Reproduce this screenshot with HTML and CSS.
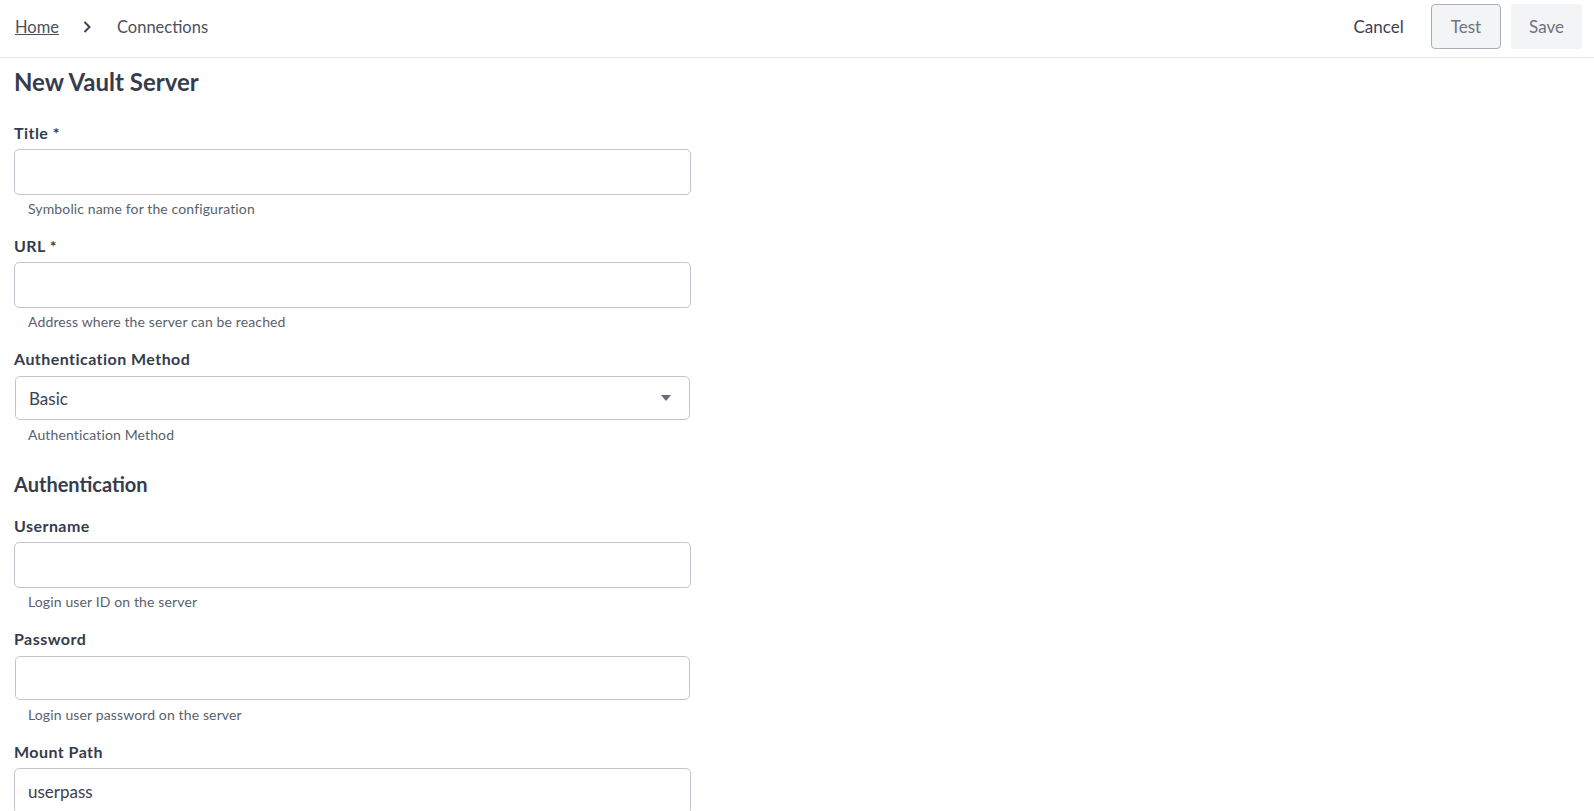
FILE: index.html
```html
<!DOCTYPE html>
<html lang="en">
<head>
  <meta charset="UTF-8">
  <title>New Vault Server</title>
  <link rel="stylesheet" href="styles.css">
</head>
<body>

  <header class="topbar">
    <nav class="crumbs">
      <a href="#" class="crumb-link">Home</a>
      <svg class="crumb-sep" width="10" height="14" viewBox="0 0 10 14">
        <path d="M2.5 2 L7.5 7 L2.5 12" fill="none" stroke="#3d4352" stroke-width="2"/>
      </svg>
      <span class="crumb-current">Connections</span>
    </nav>
    <div class="actions">
      <button class="btn btn-plain">Cancel</button>
      <button class="btn btn-outline">Test</button>
      <button class="btn btn-soft">Save</button>
    </div>
  </header>

  <main class="page">
    <h1 class="page-title">New Vault Server</h1>

    <div class="field">
      <label class="field-label">Title *</label>
      <input class="text-input" type="text">
      <p class="field-help">Symbolic name for the configuration</p>
    </div>

    <div class="field">
      <label class="field-label">URL *</label>
      <input class="text-input" type="text">
      <p class="field-help">Address where the server can be reached</p>
    </div>

    <div class="field">
      <label class="field-label">Authentication Method</label>
      <div class="inset-wrap">
        <div class="select-box">
          <span>Basic</span>
          <span class="caret"></span>
        </div>
      </div>
      <p class="field-help">Authentication Method</p>
    </div>

    <h3 class="section-title">Authentication</h3>

    <div class="field">
      <label class="field-label">Username</label>
      <input class="text-input" type="text">
      <p class="field-help">Login user ID on the server</p>
    </div>

    <div class="field">
      <label class="field-label">Password</label>
      <div class="inset-wrap">
        <input class="text-input inset" type="password">
      </div>
      <p class="field-help">Login user password on the server</p>
    </div>

    <div class="field">
      <label class="field-label">Mount Path</label>
      <input class="text-input" type="text" value="userpass">
    </div>
  </main>

</body>
</html>
```

FILE: styles.css
```css
body {
  margin: 0;
  font-family: Lato, "Open Sans", sans-serif;
  color: #3b4150;
  background: #ffffff;
  overflow: hidden;
}

.topbar {
  height: 53px;
  padding: 0 12px 4px 15px;
  display: flex;
  align-items: center;
  justify-content: space-between;
  border-bottom: 1px solid #e6e6e6;
}

.crumbs {
  display: flex;
  align-items: center;
  font-size: 16.5px;
}

.crumb-link {
  color: #4a5060;
  text-decoration: underline;
}

.crumb-sep {
  margin: 0 25px 0 23px;
}

.crumb-current {
  color: #4a5060;
}

.actions {
  display: flex;
  gap: 10px;
  align-items: center;
}

.btn {
  font-family: Lato, sans-serif;
  font-size: 17px;
  height: 45px;
  padding: 0 18px;
  border-radius: 4px;
  border: 1px solid transparent;
  background: none;
  cursor: pointer;
}

.btn-plain {
  color: #3b4150;
  padding: 0 16px;
}

.btn-outline {
  background: #f3f4f6;
  border-color: #a9adb5;
  color: #6d7380;
  padding: 0 19px;
}

.btn-soft {
  padding: 0 17px;
  background: #f3f4f6;
  color: #6d7380;
}

.page {
  padding: 0 14px;
  width: 677px;
}

.page-title {
  font-size: 24px;
  line-height: 28px;
  margin: 10px 0 27px;
  color: #363c4b;
}

.field {
  margin-bottom: 18px;
}

.field-label {
  display: block;
  font-size: 16px;
  font-weight: bold;
  letter-spacing: 0.45px;
  line-height: 20px;
  margin-bottom: 6px;
  color: #363c4b;
}

.text-input {
  display: block;
  box-sizing: border-box;
  width: 100%;
  height: 46px;
  margin: 0;
  padding: 0 13px;
  border: 1px solid #c3c6cc;
  border-radius: 5px;
  font-family: Lato, sans-serif;
  font-size: 17px;
  color: #3b4150;
  outline: none;
}

.inset-wrap {
  padding: 1px;
  height: 46px;
  box-sizing: border-box;
}

.text-input.inset {
  height: 44px;
}

.select-box {
  box-sizing: border-box;
  height: 44px;
  display: flex;
  align-items: center;
  justify-content: space-between;
  padding: 0 18px 0 13px;
  border: 1px solid #c3c6cc;
  border-radius: 5px;
  font-size: 17px;
}

.caret {
  width: 0;
  height: 0;
  border-left: 5px solid transparent;
  border-right: 5px solid transparent;
  border-top: 6px solid #666b75;
}

.field-help {
  margin: 5px 0 0 14px;
  font-size: 14px;
  letter-spacing: 0.13px;
  line-height: 18px;
  color: #5a616e;
}

.section-title {
  font-size: 20px;
  line-height: 24px;
  margin: 28px 0 20px;
  color: #363c4b;
}
```
